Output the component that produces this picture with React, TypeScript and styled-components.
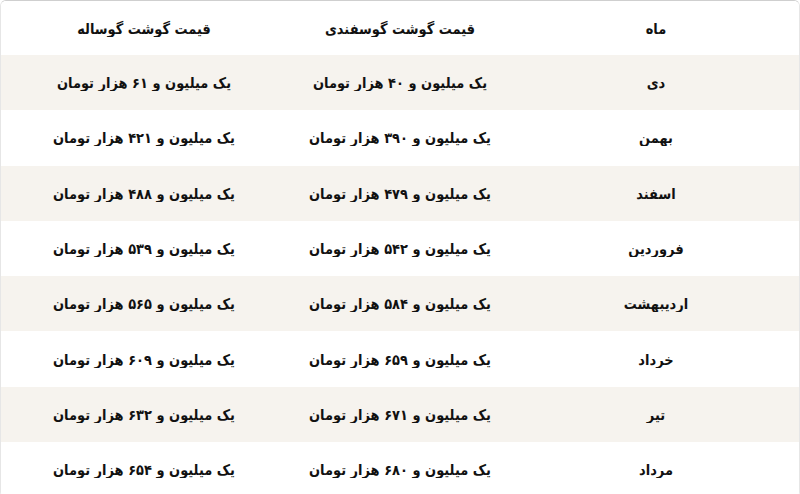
import React from 'react';
import styled, { createGlobalStyle } from 'styled-components';

interface PriceRow {
  month: string;
  sheep: string;
  veal: string;
}

const rows: PriceRow[] = [
  { month: 'دی', sheep: 'یک میلیون و ۴۰ هزار تومان', veal: 'یک میلیون و ۶۱ هزار تومان' },
  { month: 'بهمن', sheep: 'یک میلیون و ۳۹۰ هزار تومان', veal: 'یک میلیون و ۴۲۱ هزار تومان' },
  { month: 'اسفند', sheep: 'یک میلیون و ۴۷۹ هزار تومان', veal: 'یک میلیون و ۴۸۸ هزار تومان' },
  { month: 'فروردین', sheep: 'یک میلیون و ۵۴۲ هزار تومان', veal: 'یک میلیون و ۵۳۹ هزار تومان' },
  { month: 'اردیبهشت', sheep: 'یک میلیون و ۵۸۴ هزار تومان', veal: 'یک میلیون و ۵۶۵ هزار تومان' },
  { month: 'خرداد', sheep: 'یک میلیون و ۶۵۹ هزار تومان', veal: 'یک میلیون و ۶۰۹ هزار تومان' },
  { month: 'تیر', sheep: 'یک میلیون و ۶۷۱ هزار تومان', veal: 'یک میلیون و ۶۳۲ هزار تومان' },
  { month: 'مرداد', sheep: 'یک میلیون و ۶۸۰ هزار تومان', veal: 'یک میلیون و ۶۵۴ هزار تومان' },
];

const App: React.FC = () => {
  return (
    <>
      <GlobalStyle />
      <STable dir="rtl">
        <SHead>
          <SCell>ماه</SCell>
          <SCell>قیمت گوشت گوسفندی</SCell>
          <SCell>قیمت گوشت گوساله</SCell>
        </SHead>
        {rows.map((item, i) => (
          <SRow key={item.month} striped={i % 2 === 0}>
            <SCell>{item.month}</SCell>
            <SCell>{item.sheep}</SCell>
            <SCell>{item.veal}</SCell>
          </SRow>
        ))}
      </STable>
    </>
  );
};

const GlobalStyle = createGlobalStyle`
  html, body {
    margin: 0;
    padding: 0;
    background: #ffffff;
    overflow: hidden;
  }
  body {
    font-family: "DejaVu Sans", "Liberation Sans", sans-serif;
    color: #111111;
  }
`;

const STable = styled.div`
  width: 800px;
  box-sizing: border-box;
  border: 1px solid #e6e6e6;
  border-top-color: #cfcfcf;
  border-radius: 6px;
  overflow: hidden;
`;

const SHead = styled.div`
  display: grid;
  grid-template-columns: 256px 256px 256px;
  justify-content: center;
  align-items: center;
  height: 54px;
  background: #ffffff;
`;

const SRow = styled.div<{ striped: boolean }>`
  display: grid;
  grid-template-columns: 256px 256px 256px;
  justify-content: center;
  align-items: center;
  height: 55.3px;
  background: ${(p) => (p.striped ? '#f6f3ee' : '#ffffff')};
`;

const SCell = styled.div`
  text-align: center;
  font-size: 13px;
  font-weight: bold;
  white-space: nowrap;
  transform: scaleY(1.12);
`;

export default App;
